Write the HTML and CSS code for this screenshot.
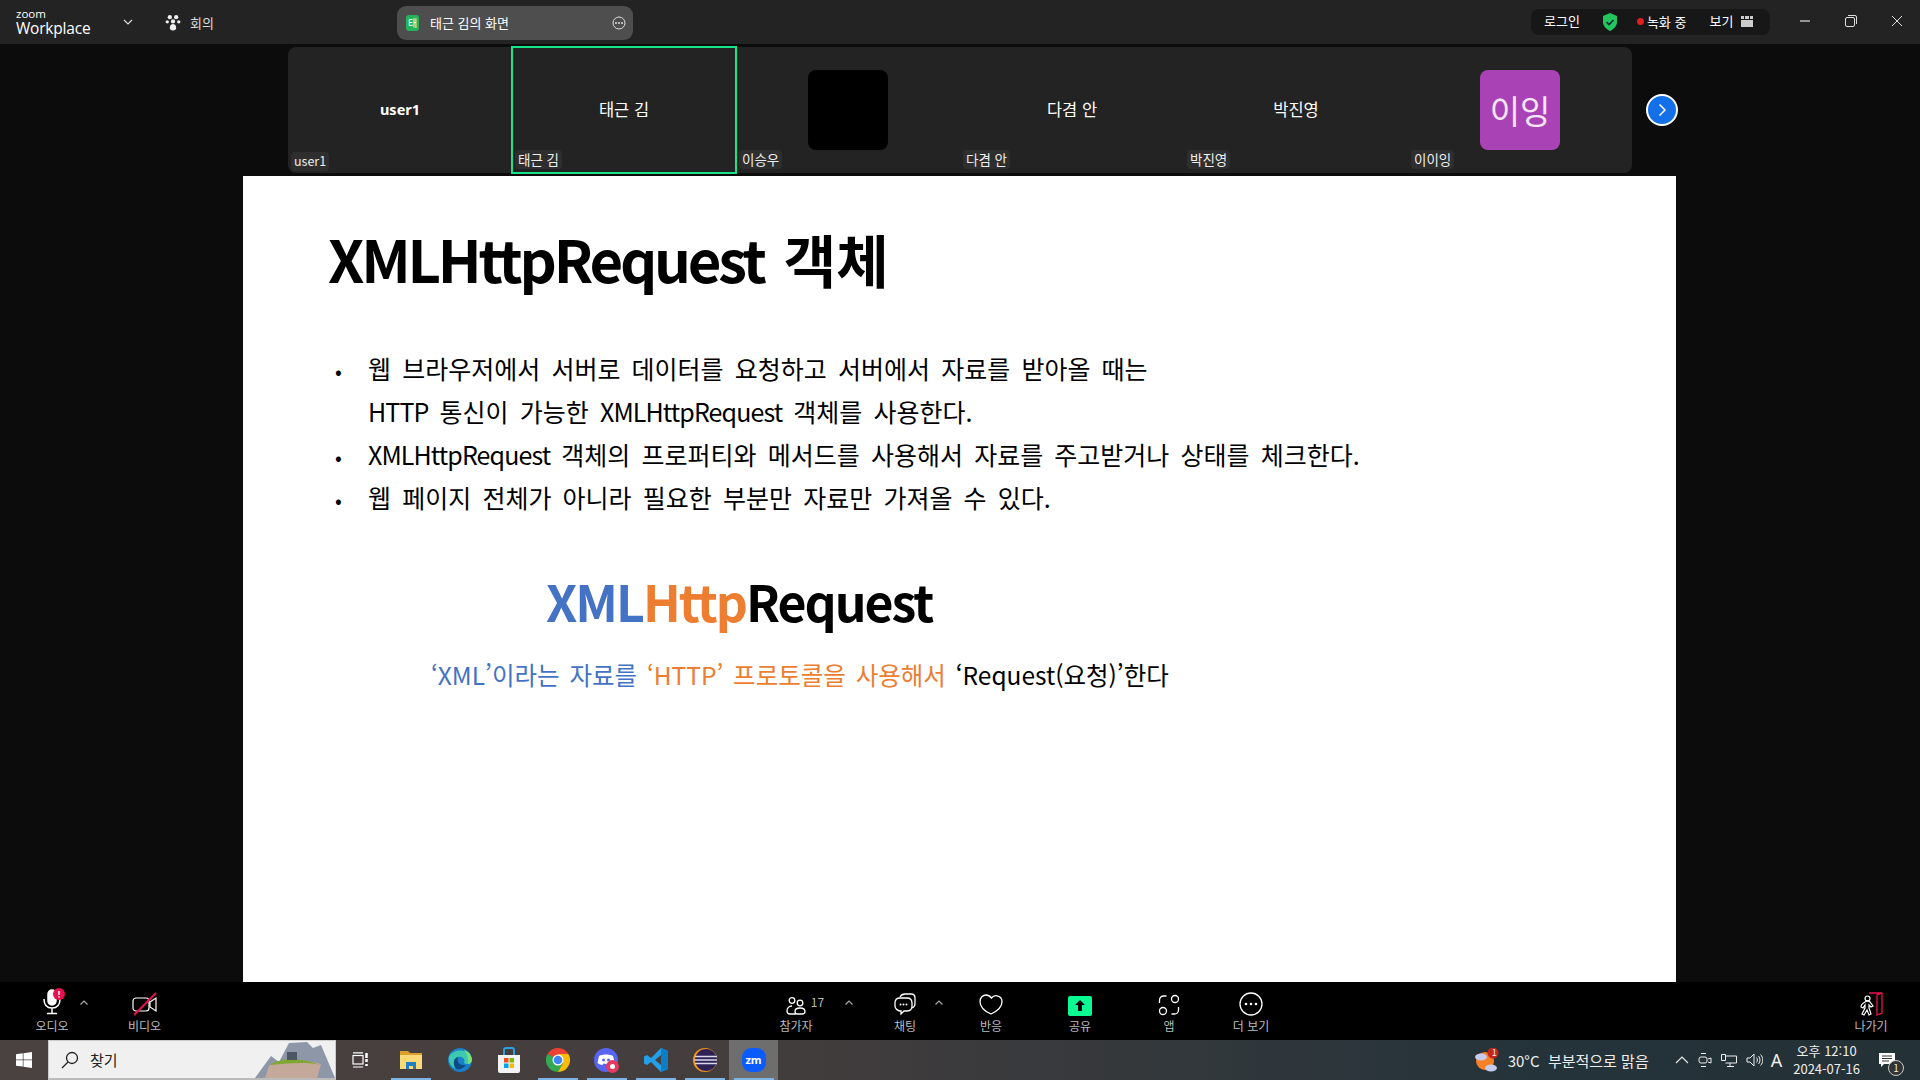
FILE: index.html
```html
<!DOCTYPE html>
<html lang="ko">
<head>
  <meta charset="UTF-8">
  <title>Zoom Workplace</title>
  <link rel="stylesheet" href="styles.css">
</head>
<body>
  <header class="topbar">
    <div class="brand"><span class="brand-small">zoom</span><span class="brand-big">Workplace</span></div>
    <svg class="brand-caret" width="10" height="6" viewBox="0 0 10 6"><path d="M1 1l4 4 4-4" fill="none" stroke="#ddd" stroke-width="1.2"/></svg>
    <div class="meeting">
      <svg width="16" height="17" viewBox="0 0 14 16" fill="#eee"><circle cx="4" cy="3" r="2"/><circle cx="10" cy="3" r="2"/><circle cx="1.6" cy="7.4" r="1.6"/><circle cx="12.4" cy="7.4" r="1.6"/><circle cx="7" cy="7" r="2"/><path d="M4 13c0-2.400 1.300-3.500 3-3.500s3 1.100 3 3.500c0 1.800-1 2.500-3 2.500s-3-.7-3-2.500z"/></svg>
      <span>회의</span>
    </div>
    <div class="share-pill">
      <span class="share-badge">태</span>
      <span class="share-name">태근 김의 화면</span>
      <svg class="share-more" width="14" height="14" viewBox="0 0 14 14"><circle cx="7" cy="7" r="6" fill="none" stroke="#ddd"/><circle cx="4" cy="7" r="1" fill="#ddd"/><circle cx="7" cy="7" r="1" fill="#ddd"/><circle cx="10" cy="7" r="1" fill="#ddd"/></svg>
    </div>
    <div class="status">
      <span class="status-login">로그인</span>
      <svg width="16" height="18" viewBox="0 0 16 18"><path d="M8 0l7 3v6c0 4-3 7-7 9-4-2-7-5-7-9V3z" fill="#22c55e"/><path d="M4.500 9l2.500 2.500 4.500-4.500" fill="none" stroke="#123" stroke-width="1.600"/></svg>
      <span class="status-rec"><i class="rec-dot"></i>녹화 중</span>
      <span class="status-view">보기</span>
      <svg width="12" height="11" viewBox="0 0 12 11" fill="#ccc"><path d="M0 4h12v7H0zM0 0h3v3H0zM4 0h4v3H4zM9 0h3v3H9z"/></svg>
    </div>
    <div class="win-btns">
      <svg width="12" height="12" viewBox="0 0 12 12"><path d="M1 6h10" stroke="#bbb" stroke-width="1.500"/></svg>
      <svg width="12" height="12" viewBox="0 0 12 12" fill="none" stroke="#ddd"><rect x=".5" y="2.500" width="9" height="9" rx="1.500"/><path d="M3 .5h7a1.500 1.500 0 0 1 1.500 1.500v7"/></svg>
      <svg width="12" height="12" viewBox="0 0 12 12"><path d="M1 1l10 10M11 1L1 11" stroke="#ddd"/></svg>
    </div>
  </header>

  <main class="stage">
    <div class="strip-row">
      <div class="strip">
        <div class="tile"><b class="tile-name bold">user1</b><span class="tile-label">user1</span></div>
        <div class="tile active"><span class="tile-name">태근 김</span><span class="tile-label">태근 김</span></div>
        <div class="tile"><div class="avatar black"></div><span class="tile-label">이승우</span></div>
        <div class="tile"><span class="tile-name">다겸 안</span><span class="tile-label">다겸 안</span></div>
        <div class="tile"><span class="tile-name">박진영</span><span class="tile-label">박진영</span></div>
        <div class="tile"><div class="avatar purple">이잉</div><span class="tile-label">이이잉</span></div>
      </div>
      <div class="next-btn">
        <svg width="10" height="14" viewBox="0 0 10 14"><path d="M2.500 1.500l5.500 5.500-5.500 5.500" fill="none" stroke="#fff" stroke-width="1.500"/></svg>
      </div>
    </div>

    <section class="slide">
      <h1 class="slide-title">XMLHttpRequest <span class="title-ko">객체</span></h1>
      <ul class="slide-list">
        <li>웹 브라우저에서 서버로 데이터를 요청하고 서버에서 자료를 받아올 때는<br><span class="latin">HTTP</span> 통신이 가능한 <span class="latin">XMLHttpRequest</span> 객체를 사용한다.</li>
        <li><span class="latin">XMLHttpRequest</span> 객체의 프로퍼티와 메서드를 사용해서 자료를 주고받거나 상태를 체크한다.</li>
        <li>웹 페이지 전체가 아니라 필요한 부분만 자료만 가져올 수 있다.</li>
      </ul>
      <div class="slide-word"><span class="blue">XML</span><span class="orange">Http</span>Request</div>
      <div class="slide-note"><span class="blue">‘XML’이라는 자료를</span> <span class="orange">‘HTTP’ 프로토콜을 사용해서</span> ‘Request(요청)’한다</div>
    </section>
  </main>

  <footer class="toolbar">
    <div class="tool tool-audio">
      <svg width="38" height="28" viewBox="0 0 38 28" fill="none" stroke="#fff" stroke-width="1.500"><rect x="15" y="2" width="8" height="15" rx="4" fill="#fff"/><path d="M11 11c0 6 3 9 8 9s8-3 8-9M19 20v5M14 25.500h10"/><circle cx="26" cy="6" r="6" fill="#e8114f" stroke="none"/><path d="M26 3v4M26 8.200v1.300" stroke="#fff"/></svg>
      <span>오디오</span>
    </div>
    <svg class="caret caret-audio" width="8" height="5" viewBox="0 0 8 5"><path d="M.5 4.500L4 1l3.500 3.500" fill="none" stroke="#aaa" stroke-width="1.200"/></svg>
    <div class="tool tool-video">
      <svg width="26" height="24" viewBox="0 0 26 24" fill="none" stroke="#fff" stroke-width="1.200"><rect x="1" y="6" width="16" height="13" rx="3"/><path d="M18 10l6-4v13l-6-4z"/><path d="M24 1L2 23" stroke="#e8114f" stroke-width="2"/></svg>
      <span>비디오</span>
    </div>

    <div class="tool tool-people">
      <div class="tool-icon-row">
        <svg width="20" height="20" viewBox="0 0 20 20" fill="none" stroke="#fff" stroke-width="1.300"><circle cx="6" cy="4.500" r="2.800"/><circle cx="14" cy="7" r="2.800"/><path d="M6 10c-3 0-5 2-5 5 0 2 1 3 3 3h6M11.500 18h4.500c2 0 3-.8 3-2.500 0-2-1.500-3.500-5-3.500s-5 1.500-5 3.500c0 1.700 .5 2.500 2.500 2.500z"/></svg>
        <em class="count">17</em>
      </div>
      <span>참가자</span>
    </div>
    <svg class="caret caret-people" width="8" height="5" viewBox="0 0 8 5"><path d="M.5 4.500L4 1l3.500 3.500" fill="none" stroke="#aaa" stroke-width="1.200"/></svg>
    <div class="tool tool-chat">
      <svg width="24" height="24" viewBox="0 0 24 24" fill="none" stroke="#fff" stroke-width="1.300"><path d="M7 5c1-2 2-3 5-3h6c3 0 4 2 4 4v6c0 2-1 3-3 4"/><path d="M7 6h7c3 0 5 2 5 5v3c0 3-2 5-5 5h-3l-3 3v-3c-3 0-6-2-6-5v-3c0-3 2-5 5-5z"/><circle cx="7.500" cy="12.500" r="1" fill="#fff" stroke="none"/><circle cx="10.500" cy="12.500" r="1" fill="#fff" stroke="none"/><circle cx="13.500" cy="12.500" r="1" fill="#fff" stroke="none"/></svg>
      <span>채팅</span>
    </div>
    <svg class="caret caret-chat" width="8" height="5" viewBox="0 0 8 5"><path d="M.5 4.500L4 1l3.500 3.500" fill="none" stroke="#aaa" stroke-width="1.200"/></svg>
    <div class="tool tool-react">
      <svg width="24" height="22" viewBox="0 0 24 22" fill="none" stroke="#fff" stroke-width="1.300"><path d="M12 20C5 17 1 12 1 7.500 1 3.500 4 1 7 1c2.500 0 4 1 5.500 3C14 2 16 1.500 18 1.800c3 .5 5 3 5 6 0 5-4 9-11 12.200z"/></svg>
      <span>반응</span>
    </div>
    <div class="tool tool-share">
      <svg width="24" height="20" viewBox="0 0 24 20"><rect width="24" height="20" rx="2" fill="#0bfb93"/><path d="M12 4l5 5h-3v6h-4V9H7z" fill="#000"/></svg>
      <span>공유</span>
    </div>
    <div class="tool tool-apps">
      <svg width="22" height="22" viewBox="0 0 22 22" fill="none" stroke="#fff" stroke-width="1.300"><circle cx="17" cy="5" r="3.500"/><circle cx="5" cy="17" r="3.500"/><path d="M1.500 9V6a4 4 0 0 1 4-4h3M20.500 13v3a4 4 0 0 1-4 4h-3"/></svg>
      <span>앱</span>
    </div>
    <div class="tool tool-more">
      <svg width="24" height="24" viewBox="0 0 24 24" fill="none" stroke="#fff" stroke-width="1.300"><circle cx="12" cy="12" r="11"/><circle cx="7" cy="12" r="1.300" fill="#fff" stroke="none"/><circle cx="12" cy="12" r="1.300" fill="#fff" stroke="none"/><circle cx="17" cy="12" r="1.300" fill="#fff" stroke="none"/></svg>
      <span>더 보기</span>
    </div>
    <div class="tool tool-leave">
      <svg width="24" height="24" viewBox="0 0 24 24" fill="none" stroke="#fff" stroke-width="1.200"><path d="M10 1h13v20l-5 2V3l5-2" stroke="#e8114f" stroke-width="1.300"/><circle cx="8.500" cy="6.500" r="2.500"/><path d="M6 10c-2 1-4 3-4 5l2 1 2-3v3l-3 6 2 1 3-5 2 5 2-1-2-6v-3l2 2 2-1-3-4c-1-1-3-2-5 0z"/></svg>
      <span>나가기</span>
    </div>
  </footer>

  <nav class="taskbar">
    <div class="start">
      <svg width="16" height="16" viewBox="0 0 16 16" fill="#fff"><path d="M0 2.300l6.800-1v6.200H0zM7.500 1.200L16 0v7.500H7.500zM0 8.300h6.800v6.300L0 13.700zM7.500 8.300H16V16l-8.500-1.200z"/></svg>
    </div>
    <div class="search">
      <svg width="18" height="18" viewBox="0 0 18 18" fill="none" stroke="#222" stroke-width="1.300"><circle cx="11" cy="7" r="5.500"/><path d="M7 11l-6 6"/></svg>
      <span class="search-text">찾기</span>
      <svg class="search-art" width="80" height="38" viewBox="0 0 80 38"><path d="M0 38L16 16l8 6 10-19 18-1 6 6 8-3 14 33z" fill="#8d97a8"/><path d="M14 26c8-7 30-8 52-2l-4 14H10z" fill="#c4a89a"/><path d="M15 25c10-7 30-8 50 0-12-3-28-2-50 0z" fill="#7fa832"/><path d="M32 12h10v8H32z" fill="#4b5763"/></svg>
    </div>
    <div class="task-icon task-view">
      <svg width="18" height="16" viewBox="0 0 18 16" fill="none" stroke="#fff" stroke-width="1.200"><rect x="1" y="3.500" width="10" height="8.500"/><path d="M1 .8h10M1 15h10"/><path d="M14.500 1v5M14.500 7v3M14.500 12v2" stroke-width="2.500"/></svg>
    </div>
    <div class="task-icon running">
      <svg width="22" height="18" viewBox="0 0 22 18"><path d="M0 0h8l2 2h12v16H0z" fill="#d9a02e"/><path d="M0 4h22v14H0z" fill="#fbd977"/><path d="M6 11h10v7h-3v-3H9v3H6z" fill="#1f7fc4"/></svg>
    </div>
    <div class="task-icon">
      <svg width="24" height="24" viewBox="0 0 24 24"><circle cx="12" cy="12" r="12" fill="#1a7fc8"/><path d="M1 9C4 1 20-1 24 11c0 5-5 6-8 4 2-4-2-7-6-6-4 1-6 6-2 12C3 19 0 14 1 9z" fill="#3fc8b0"/><path d="M16 2c4 1 7 4 8 9 0 3-2 5-4 5 1-5-1-10-4-14z" fill="#7be07c"/><path d="M8 21c-4-6-2-11 2-12-2 6 3 9 8 8-3 4-7 5-10 4z" fill="#0c4a86"/></svg>
    </div>
    <div class="task-icon">
      <svg width="24" height="26" viewBox="0 0 24 26"><path d="M1 8h22v16a2 2 0 0 1-2 2H3a2 2 0 0 1-2-2z" fill="#f3f3f3"/><path d="M7 8V3a2 2 0 0 1 2-2h6a2 2 0 0 1 2 2v5" fill="none" stroke="#2aa3e0" stroke-width="2"/><path d="M7 11h4.500v4.500H7z" fill="#f25022"/><path d="M12.500 11H17v4.500h-4.500z" fill="#7fba00"/><path d="M7 16.500h4.500V21H7z" fill="#00a4ef"/><path d="M12.500 16.500H17V21h-4.500z" fill="#ffb900"/></svg>
    </div>
    <div class="task-icon running">
      <svg width="24" height="24" viewBox="0 0 24 24"><path d="M12 12L1.600 6A12 12 0 0 1 22.400 6z" fill="#ea4335"/><path d="M1.600 6A12 12 0 0 0 12 24l5.200-9z" fill="#34a853"/><path d="M12 24A12 12 0 0 0 22.400 6H12l5 9z" fill="#fbbc05"/><circle cx="12" cy="12" r="5.500" fill="#fff"/><circle cx="12" cy="12" r="4.300" fill="#4285f4"/></svg>
    </div>
    <div class="task-icon running">
      <svg width="25" height="25" viewBox="0 0 25 25"><circle cx="12" cy="12" r="12" fill="#5865f2"/><path d="M5 8c4-2 10-2 14 0l2 7c-1.500 1-3 2-4.500 2l-1-1.500c-2 .5-4 .5-6 0l-1 1.500C7 17 5 16 3.500 15z" fill="#fff"/><circle cx="9.500" cy="12" r="1.500" fill="#5865f2"/><circle cx="14.500" cy="12" r="1.500" fill="#5865f2"/><circle cx="18.500" cy="18.500" r="6.500" fill="#e6395f"/><circle cx="18.500" cy="18.500" r="2.500" fill="#fff"/></svg>
    </div>
    <div class="task-icon running">
      <svg width="24" height="24" viewBox="0 0 24 24"><path d="M17 0l7 3v18l-7 3L7 14l-4 3-3-1.500v-7L3 7l4 3z" fill="#23a0e8"/><path d="M17 0l7 3v18l-7 3z" fill="#0f7dc4"/><path d="M17 7l-6 5 6 5z" fill="#453f3f"/></svg>
    </div>
    <div class="task-icon running">
      <svg width="24" height="24" viewBox="0 0 24 24"><circle cx="12" cy="12" r="12" fill="#f7941e"/><circle cx="13" cy="12" r="11" fill="#2c2255"/><path d="M2 8.500h22M1.500 12h23M2 15.500h22" stroke="#dcd8ea" stroke-width="1.500"/></svg>
    </div>
    <div class="task-icon zoom-app">
      <span class="zm-logo">zm</span>
    </div>

    <div class="tray">
      <div class="weather">
        <svg width="24" height="24" viewBox="0 0 24 24"><circle cx="10" cy="13" r="9" fill="#f58025"/><ellipse cx="6" cy="9" rx="6" ry="3.500" fill="#c6cbee"/><ellipse cx="16" cy="20" rx="6" ry="3.500" fill="#c6cbee"/><circle cx="18" cy="5" r="5.500" fill="#c4261d"/></svg>
        <span class="weather-badge">1</span>
      </div>
      <span class="weather-text">30°C&nbsp; 부분적으로 맑음</span>
      <svg class="tray-caret" width="14" height="8" viewBox="0 0 14 8"><path d="M1 7l6-6 6 6" fill="none" stroke="#eee" stroke-width="1.100"/></svg>
      <svg width="14" height="16" viewBox="0 0 14 16" fill="none" stroke="#eee"><rect x="1" y="5" width="8" height="6" rx="2"/><path d="M10 7l3-1v5l-3-1M3 1.500h5M3 14.500h5"/></svg>
      <svg width="16" height="14" viewBox="0 0 16 14" fill="none" stroke="#eee"><path d="M.5 1.500h4v6h-4zM4.500 3h11v7h-11M9 10v3M6 13.500h7"/></svg>
      <svg width="17" height="14" viewBox="0 0 17 14" fill="none" stroke="#eee"><path d="M1 5h3l4-4v12L4 9H1zM10.500 4.500c1.200 1.500 1.200 3.500 0 5M12.500 3c2 2.500 2 5.500 0 8M14.500 1.500c3 3 3 8 0 11"/></svg>
      <span class="tray-lang">A</span>
      <div class="clock"><span>오후 12:10</span><span>2024-07-16</span></div>
      <div class="notify">
        <svg width="16" height="15" viewBox="0 0 16 15"><path d="M0 0h16v11H5l-3 3v-3H0z" fill="#fff"/><path d="M3 3h10M3 5.500h10M3 8h7" stroke="#333"/></svg>
        <span class="notify-badge">1</span>
      </div>
    </div>
  </nav>
</body>
</html>
```

FILE: styles.css
```css
* {
  box-sizing: border-box;
}
html, body {
  margin: 0;
  height: 100%;
}
body {
  width: 1920px;
  height: 1080px;
  overflow: hidden;
  display: flex;
  flex-direction: column;
  background: #0c0c0c;
  color: #fff;
  font-family: "Noto Sans CJK KR", "Noto Sans", sans-serif;
}

/* top bar */
.topbar {
  height: 44px;
  flex: none;
  display: flex;
  align-items: center;
  background: #232323;
}
.brand {
  width: 102px;
  margin-left: 16px;
  display: flex;
  flex-direction: column;
  line-height: 1;
}
.brand-small {
  font-family: "Open Sans", sans-serif;
  font-size: 11.5px;
  height: 12px;
}
.brand-big {
  font-family: "Open Sans", sans-serif;
  font-size: 15.5px;
  margin-top: 1px;
  letter-spacing: -.2px;
}
.brand-caret {
  margin-left: 5px;
}
.meeting {
  display: flex;
  align-items: center;
  gap: 9px;
  margin-left: 32px;
  font-size: 13px;
  color: #ddd;
  width: 232px;
}
.share-pill {
  width: 236px;
  height: 34px;
  margin-top: 2px;
  padding: 0 7px 0 9px;
  display: flex;
  align-items: center;
  background: #4e4e4e;
  border-radius: 9px;
  font-size: 13px;
}
.share-badge {
  width: 13px;
  height: 16px;
  border-radius: 3px;
  background: #25b35c;
  font-size: 10px;
  line-height: 16px;
  text-align: center;
}
.share-name {
  margin-left: 11px;
  margin-top: -2px;
  flex: 1;
}
.status {
  margin-left: 898px;
  width: 239px;
  height: 26px;
  margin-top: -1px;
  padding-left: 13px;
  display: flex;
  align-items: center;
  background: #171717;
  border-radius: 8px;
  font-size: 13px;
}
.status-login {
  margin-top: -3px;
  margin-right: 22px;
}
.status-rec {
  margin-left: 19px;
  display: flex;
  align-items: center;
  gap: 3px;
}
.rec-dot {
  width: 7px;
  height: 7px;
  border-radius: 50%;
  background: #e02020;
}
.status-view {
  margin-top: -3px;
  margin-left: 23px;
  margin-right: 8px;
}
.status svg:last-child {
  margin-top: -1px;
}
.win-btns {
  margin-left: 29px;
  margin-top: -3px;
  width: 104px;
  display: flex;
  justify-content: space-between;
}

/* gallery strip + slide */
.stage {
  flex: 1;
  display: flex;
  flex-direction: column;
  align-items: center;
  min-height: 0;
}
.strip-row {
  width: 1344px;
  height: 132px;
  flex: none;
  position: relative;
  padding-top: 3px;
}
.strip {
  height: 126px;
  display: flex;
  background: #232323;
  border-radius: 8px;
}
.tile {
  width: 224px;
  position: relative;
  display: flex;
  align-items: center;
  justify-content: center;
  font-size: 16.5px;
}
.tile.active::after {
  content: "";
  position: absolute;
  inset: -1px;
  border: 2px solid #17e38b;
}
.tile-name {
  margin-bottom: 3px;
}
.tile-name.bold {
  font-family: "Noto Sans", sans-serif;
  font-weight: 700;
  font-size: 14.5px;
  margin-bottom: 2px;
}
.tile-label {
  position: absolute;
  left: 3px;
  bottom: 4px;
  height: 19px;
  padding: 0 3px;
  line-height: 18px;
  font-size: 13.5px;
  color: #eee;
  background: #2e2e2e;
  border-radius: 4px;
}
.tile:first-child .tile-label {
  bottom: 2px;
  font-size: 12.5px;
}
.avatar {
  width: 80px;
  height: 80px;
  border-radius: 8px;
}
.avatar.black {
  background: #000;
}
.avatar.purple {
  background: #a942b5;
  display: flex;
  align-items: center;
  justify-content: center;
  font-size: 33px;
  color: #f4e6f6;
}
.next-btn {
  position: absolute;
  right: -46px;
  top: 50px;
  width: 32px;
  height: 32px;
  display: flex;
  align-items: center;
  justify-content: center;
  border: 2px solid #fff;
  border-radius: 50%;
  background: #1470e8;
}
.slide {
  width: 1433px;
  margin-right: 1px;
  flex: 1;
  color: #000;
  background: #fff;
  font-family: "Noto Sans CJK KR", sans-serif;
}
.slide-title {
  margin: 0;
  padding: 42px 0 0 85px;
  font-size: 58px;
  line-height: 80px;
  font-weight: 700;
  letter-spacing: -3.2px;
}
.title-ko {
  font-size: 57px;
  letter-spacing: 0;
  margin-left: 7px;
}
.slide-list {
  list-style: none;
  margin: 49px 0 0;
  padding: 0 0 0 125px;
  font-size: 25px;
  line-height: 43px;
  word-spacing: 4.2px;
}
.slide-list li::before {
  content: "•";
  display: inline-block;
  width: 33px;
  margin-left: -33px;
  font-size: 20px;
  line-height: 1;
}
.latin {
  letter-spacing: -.9px;
}
.slide-word {
  margin: 45.5px 0 0 303px;
  font-size: 50px;
  line-height: 70px;
  font-weight: 700;
  letter-spacing: -2px;
}
.slide-note {
  margin: 22px 0 0 188px;
  font-size: 24.5px;
  line-height: 36px;
  word-spacing: 3px;
}
.blue {
  color: #4472c4;
}
.orange {
  color: #ed7d31;
}

/* meeting toolbar */
.toolbar {
  height: 58px;
  flex: none;
  display: flex;
  align-items: flex-end;
  background: #000;
  font-size: 12px;
  color: #bbb;
}
.tool {
  display: flex;
  flex-direction: column;
  align-items: center;
  justify-content: flex-end;
  height: 58px;
  padding-bottom: 7px;
  flex: none;
}
.tool span {
  line-height: 14px;
  margin-top: 3px;
}
.tool-audio { margin-left: 33px; width: 38px; }
.caret { margin-bottom: 35px; flex: none; }
.caret-audio { margin-left: 8.5px; }
.tool-video { margin-left: 37px; width: 40px; }
.tool-people { margin-left: 611.5px; width: 40px; }
.tool-icon-row { display: flex; align-items: flex-start; gap: 5px; margin-left: 18px; }
.count { font-style: normal; font-size: 12px; line-height: 13px; margin-top: -1px; }
.caret-people { margin-left: 29px; }
.tool-chat { margin-left: 39px; width: 26px; }
.caret-chat { margin-left: 17px; }
.tool-react { margin-left: 33px; width: 30px; }
.tool-share { margin-left: 59px; width: 30px; }
.tool-apps { margin-left: 64px; width: 20px; }
.tool-more { margin-left: 51px; width: 42px; }
.tool-leave { margin-left: 581px; width: 36px; }

/* windows taskbar */
.taskbar {
  height: 40px;
  flex: none;
  display: flex;
  align-items: center;
  background: linear-gradient(90deg, #4a4240 0%, #433d3d 40%, #24333a 80%, #243237 100%);
}
.start {
  width: 48px;
  display: flex;
  justify-content: center;
}
.search {
  width: 288px;
  height: 40px;
  padding-left: 12px;
  display: flex;
  align-items: center;
  background: #f0f0f0;
  border: 1px solid #ccc;
  border-bottom: 2px solid #bbb;
  color: #222;
  font-size: 15px;
  position: relative;
  overflow: hidden;
}
.search-text {
  margin-left: 11px;
}
.search-art {
  position: absolute;
  right: 0;
  bottom: 0;
}
.task-icon {
  width: 49px;
  height: 40px;
  display: flex;
  align-items: center;
  justify-content: center;
  flex: none;
}
.task-view {
  width: 50px;
}
.running {
  background: linear-gradient(#7cb4e6, #7cb4e6) center bottom / 40px 2px no-repeat;
}
.zoom-app {
  background: linear-gradient(#7cb4e6, #7cb4e6) center bottom / 40px 2px no-repeat, #6e6e6e;
}
.zm-logo {
  width: 24px;
  height: 24px;
  border-radius: 9px;
  background: #0b5cff;
  font-family: "Noto Sans", sans-serif;
  font-weight: 700;
  font-size: 11px;
  line-height: 23px;
  text-align: center;
}
.tray {
  margin-left: auto;
  height: 40px;
  display: flex;
  align-items: center;
  gap: 9px;
  font-size: 15px;
  color: #eee;
}
.weather {
  position: relative;
  display: flex;
}
.weather-badge {
  position: absolute;
  top: 0;
  right: 2px;
  font-size: 9px;
  line-height: 10px;
}
.weather-text {
  margin-right: 17px;
}
.tray-lang {
  font-family: "Noto Sans", sans-serif;
  font-size: 18px;
  margin-left: -1px;
}
.clock {
  display: flex;
  flex-direction: column;
  align-items: center;
  font-size: 13px;
  line-height: 18px;
  margin-left: 2px;
}
.notify {
  position: relative;
  display: flex;
  margin: 0 25px 0 10px;
}
.notify-badge {
  position: absolute;
  right: -9px;
  bottom: -8px;
  width: 16px;
  height: 16px;
  border: 1.500px solid #ccc;
  border-radius: 50%;
  background: #333;
  font-size: 10px;
  line-height: 13px;
  text-align: center;
}
```
